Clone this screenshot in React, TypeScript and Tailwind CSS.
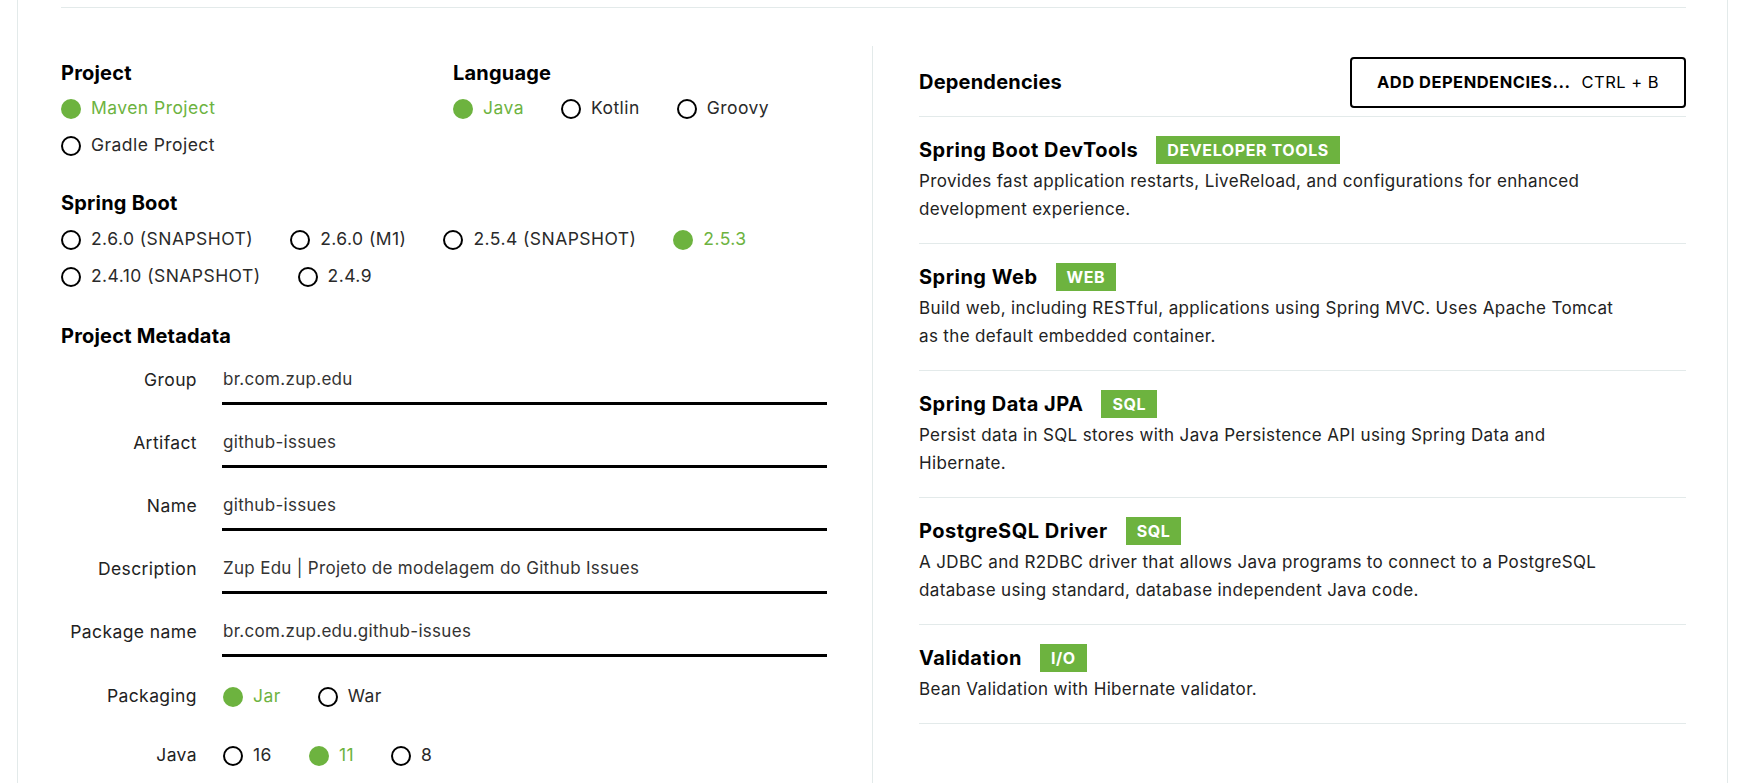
import React from "react"

const FONT = { fontFamily: "Inter, 'Noto Sans', sans-serif" }

function Radio({ label, checked, last }: { label: string; checked?: boolean; last?: boolean }) {
  return (
    <div className={last ? "flex items-center h-[37px]" : "flex items-center h-[37px] mr-[37px]"}>
      {checked ? (
        <span className="w-[20px] h-[20px] rounded-full bg-[#6db33f] shrink-0" />
      ) : (
        <span className="w-[20px] h-[20px] rounded-full border-2 border-black shrink-0" />
      )}
      <span
        className={
          checked
            ? "ml-[10px] text-[17.5px] tracking-[0.45px] text-[#6db33f]"
            : "ml-[10px] text-[17.5px] tracking-[0.45px] text-[#2a2a2a]"
        }
      >
        {label}
      </span>
    </div>
  )
}

function Heading({ children }: { children: React.ReactNode }) {
  return <h2 className="text-[20px] leading-[24px] font-bold tracking-[0.2px] text-black">{children}</h2>
}

function Field({ label, value }: { label: string; value: string }) {
  return (
    <div className="flex items-start">
      <div className="w-[136px] h-[44px] flex items-center justify-end text-[17.5px] tracking-[0.4px] text-[#222]">
        {label}
      </div>
      <div className="ml-[25px] w-[605px] h-[47px] border-b-[3px] border-black flex items-center pl-[1px] text-[17px] tracking-[0.3px] text-[#333]">
        {value}
      </div>
    </div>
  )
}

function OptionRow({ label, children }: { label: string; children: React.ReactNode }) {
  return (
    <div className="flex items-center h-[37px]">
      <div className="w-[136px] text-right text-[17.5px] tracking-[0.4px] text-[#222]">{label}</div>
      <div className="ml-[26px] flex items-center">{children}</div>
    </div>
  )
}

const deps = [
  {
    name: "Spring Boot DevTools",
    tag: "DEVELOPER TOOLS",
    lines: ["Provides fast application restarts, LiveReload, and configurations for enhanced", "development experience."],
  },
  {
    name: "Spring Web",
    tag: "WEB",
    lines: ["Build web, including RESTful, applications using Spring MVC. Uses Apache Tomcat", "as the default embedded container."],
  },
  {
    name: "Spring Data JPA",
    tag: "SQL",
    lines: ["Persist data in SQL stores with Java Persistence API using Spring Data and", "Hibernate."],
  },
  {
    name: "PostgreSQL Driver",
    tag: "SQL",
    lines: ["A JDBC and R2DBC driver that allows Java programs to connect to a PostgreSQL", "database using standard, database independent Java code."],
  },
  {
    name: "Validation",
    tag: "I/O",
    lines: ["Bean Validation with Hibernate validator."],
  },
]

export default function App() {
  return (
    <div className="min-h-screen bg-white" style={FONT}>
      <div className="ml-[17px] w-[1711px] min-h-screen border-x border-[#e3eaea] pl-[43px] pr-[41px] pb-[40px]">
        <div className="h-[8px] border-b border-[#e3eaea]" />

        <div className="flex mt-[38px]">
          {/* left: project options + metadata */}
          <div className="w-[811px] pt-[15px]">
            <div className="flex">
              <div className="w-[392px]">
                <Heading>Project</Heading>
                <div className="mt-[5px]">
                  <Radio label="Maven Project" checked />
                  <Radio label="Gradle Project" />
                </div>
              </div>
              <div>
                <Heading>Language</Heading>
                <div className="mt-[5px] flex">
                  <Radio label="Java" checked />
                  <Radio label="Kotlin" />
                  <Radio label="Groovy" last />
                </div>
              </div>
            </div>

            <div className="mt-[27px]">
              <Heading>Spring Boot</Heading>
              <div className="mt-[6px]">
                <div className="flex">
                  <Radio label="2.6.0 (SNAPSHOT)" />
                  <Radio label="2.6.0 (M1)" />
                  <Radio label="2.5.4 (SNAPSHOT)" />
                  <Radio label="2.5.3" checked last />
                </div>
                <div className="flex">
                  <Radio label="2.4.10 (SNAPSHOT)" />
                  <Radio label="2.4.9" last />
                </div>
              </div>
            </div>

            <div className="mt-[29px]">
              <Heading>Project Metadata</Heading>
              <div className="mt-[10px] flex flex-col gap-[16px]">
                <Field label="Group" value="br.com.zup.edu" />
                <Field label="Artifact" value="github-issues" />
                <Field label="Name" value="github-issues" />
                <Field label="Description" value="Zup Edu | Projeto de modelagem do Github Issues" />
                <Field label="Package name" value="br.com.zup.edu.github-issues" />
              </div>
              <div className="mt-[21px]">
                <OptionRow label="Packaging">
                  <Radio label="Jar" checked />
                  <Radio label="War" last />
                </OptionRow>
              </div>
              <div className="mt-[22px]">
                <OptionRow label="Java">
                  <Radio label="16" />
                  <Radio label="11" checked />
                  <Radio label="8" last />
                </OptionRow>
              </div>
            </div>
          </div>

          {/* right: dependencies */}
          <div className="flex-1 border-l border-[#e3eaea] pl-[46px] pt-[11px] min-h-[760px]">
            <div className="flex items-center justify-between h-[60px] pb-[9px] border-b border-[#e3eaea]">
              <h2 className="text-[20px] font-bold tracking-[0.2px] text-black">Dependencies</h2>
              <button className="h-[51px] w-[336px] border-2 border-black rounded-[4px] flex items-center justify-center text-[16.5px] tracking-[0.5px] text-black">
                <span className="font-bold">ADD DEPENDENCIES...</span>
                <span className="ml-[11px]">CTRL + B</span>
              </button>
            </div>
            {deps.map((d) => (
              <div key={d.name} className="pt-[19px] pb-[20px] border-b border-[#e3eaea]">
                <div className="flex items-center h-[28px]">
                  <span className="text-[20px] font-bold tracking-[0.5px] text-black">{d.name}</span>
                  <span className="ml-[18px] h-[28px] px-[11px] flex items-center bg-[#6db33f] text-white text-[16px] font-bold tracking-[0.6px]">
                    {d.tag}
                  </span>
                </div>
                <p className="mt-[3px] text-[17px] leading-[28px] tracking-[0.35px] text-[#222]">
                  {d.lines.map((l, i) => (
                    <span key={i} className="block">
                      {l}
                    </span>
                  ))}
                </p>
              </div>
            ))}
          </div>
        </div>
      </div>
    </div>
  )
}
